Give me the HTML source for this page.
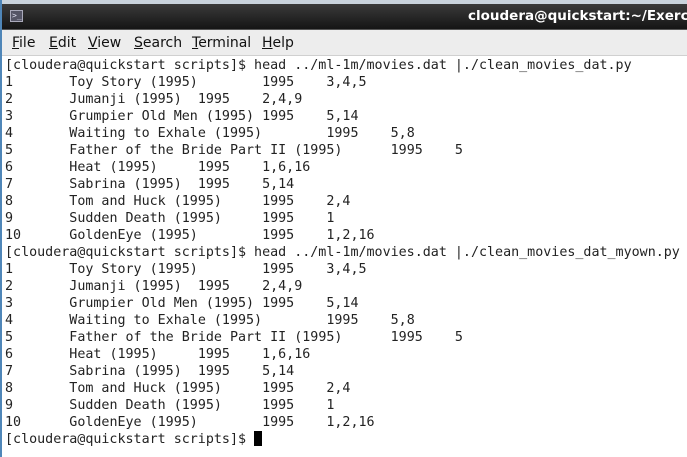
<!DOCTYPE html>
<html><head><style>
body{margin:0;width:687px;height:457px;overflow:hidden;background:#fff;position:relative;font-family:"DejaVu Sans","Liberation Sans",sans-serif}
.top{position:absolute;left:0;top:0;width:687px;height:4px;background:#c9d3dc}
.title{position:absolute;left:0;top:4px;width:687px;height:25px;background:linear-gradient(#3a3a3a,#151515);border-bottom:1px solid #555}
.title .t{position:absolute;left:468px;top:4px;color:#fff;font-weight:bold;font-size:13.5px;white-space:nowrap}
.icon{position:absolute;left:10px;top:6px;width:13px;height:12px;background:#556;border:1px solid #aab;box-sizing:border-box;color:#dde;font-size:8px;line-height:10px;padding-left:1px;font-family:"DejaVu Sans Mono",monospace}
.menu{position:absolute;left:0;top:30px;width:687px;height:25px;background:#ededed;border-bottom:1px solid #d0d0d0;font-size:14px}
.menu span{position:absolute;top:5px;color:#111}
.lb{position:absolute;left:0;top:0;width:2px;height:457px;background:#4f86b8}
pre{position:absolute;left:5px;top:57px;margin:0;font-family:"DejaVu Sans Mono","Liberation Mono",monospace;font-size:13.35px;line-height:17px;tab-size:8;-moz-tab-size:8;color:#222}
.cur{display:inline-block;width:8px;height:15px;background:#000;vertical-align:-3px}
</style></head><body>
<div class="top"></div>
<div class="title"><div class="icon">&gt;_</div><div class="t">cloudera@quickstart:~/Exerc</div></div>
<div class="menu">
<span style="left:12px"><u>F</u>ile</span>
<span style="left:49px"><u>E</u>dit</span>
<span style="left:88px"><u>V</u>iew</span>
<span style="left:134px"><u>S</u>earch</span>
<span style="left:192px"><u>T</u>erminal</span>
<span style="left:262px"><u>H</u>elp</span>
</div>
<div class="lb"></div>
<pre>[cloudera@quickstart scripts]$ head ../ml-1m/movies.dat |./clean_movies_dat.py
1	Toy Story (1995)	1995	3,4,5
2	Jumanji (1995)	1995	2,4,9
3	Grumpier Old Men (1995)	1995	5,14
4	Waiting to Exhale (1995)	1995	5,8
5	Father of the Bride Part II (1995)	1995	5
6	Heat (1995)	1995	1,6,16
7	Sabrina (1995)	1995	5,14
8	Tom and Huck (1995)	1995	2,4
9	Sudden Death (1995)	1995	1
10	GoldenEye (1995)	1995	1,2,16
[cloudera@quickstart scripts]$ head ../ml-1m/movies.dat |./clean_movies_dat_myown.py
1	Toy Story (1995)	1995	3,4,5
2	Jumanji (1995)	1995	2,4,9
3	Grumpier Old Men (1995)	1995	5,14
4	Waiting to Exhale (1995)	1995	5,8
5	Father of the Bride Part II (1995)	1995	5
6	Heat (1995)	1995	1,6,16
7	Sabrina (1995)	1995	5,14
8	Tom and Huck (1995)	1995	2,4
9	Sudden Death (1995)	1995	1
10	GoldenEye (1995)	1995	1,2,16
[cloudera@quickstart scripts]$ <span class="cur"></span></pre>
</body></html>
